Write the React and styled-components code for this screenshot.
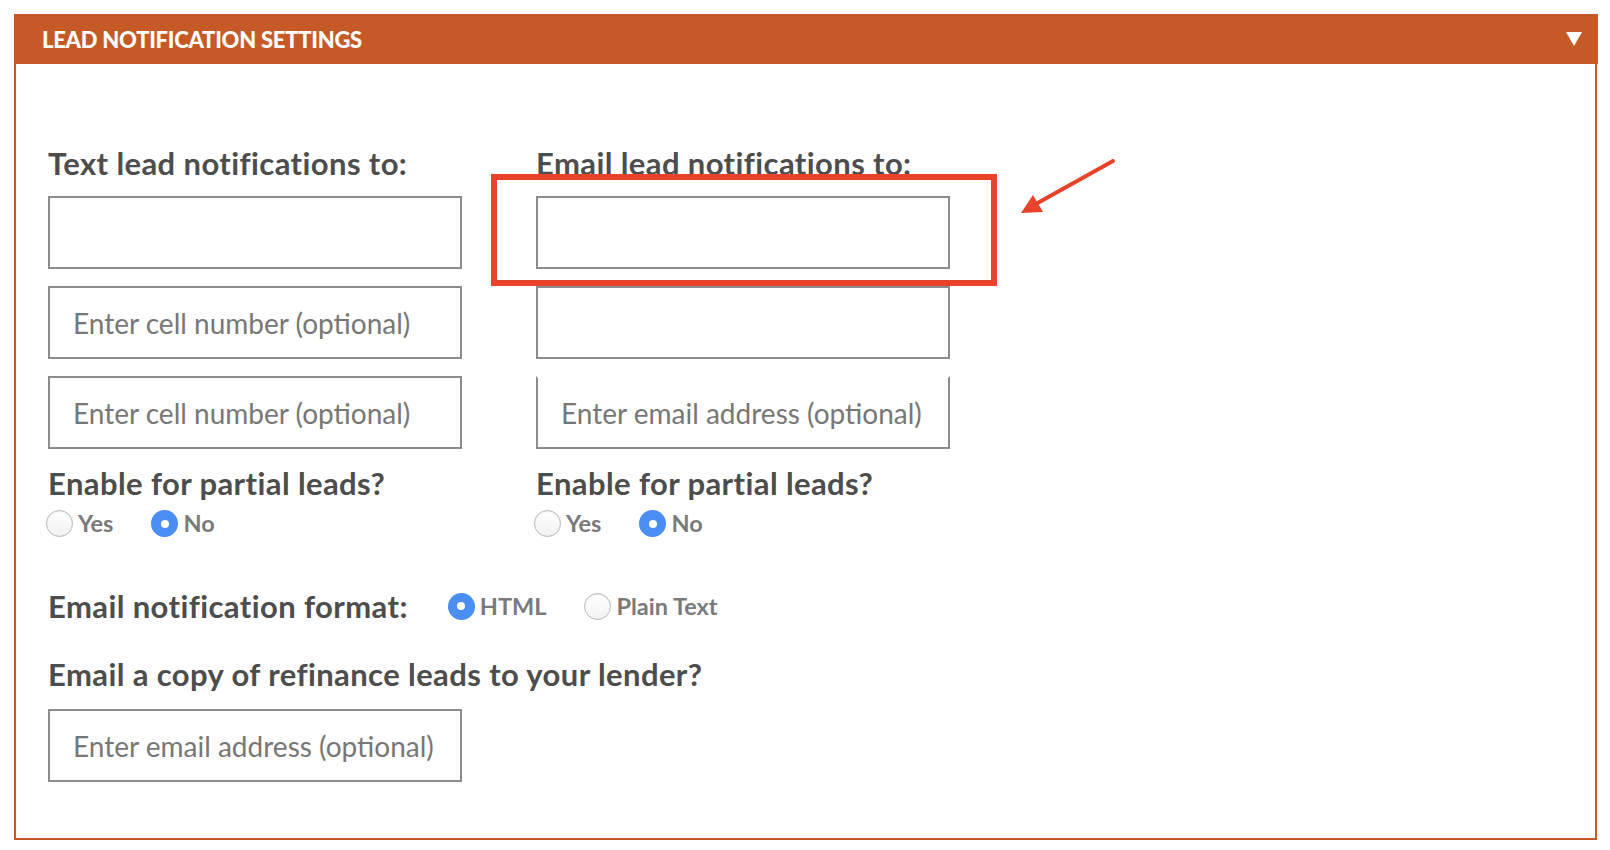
import React from 'react';
import styled, { createGlobalStyle, css } from 'styled-components';

const GlobalStyle = createGlobalStyle`
  html, body { margin: 0; padding: 0; background: #ffffff; }
  body { font-family: Lato, "Liberation Sans", sans-serif; }
  * { box-sizing: border-box; }
`;

const ORANGE = '#c55a26';
const RED = '#e8432a';

const Page = styled.div`
  padding: 14px 12px 0 14px;
`;

const Panel = styled.section`
  width: 1584px;
`;

const Header = styled.header`
  height: 50px;
  background: ${ORANGE};
  display: flex;
  align-items: center;
  justify-content: space-between;
  padding: 0 16px 0 28px;
`;

const Title = styled.h2`
  margin: 0;
  padding-top: 2px;
  color: #ffffff;
  font: 900 22px/1 Lato, "Liberation Sans", sans-serif;
  letter-spacing: -0.25px;
  text-transform: uppercase;
`;

const Caret = styled.span`
  width: 0;
  height: 0;
  border-left: 8px solid transparent;
  border-right: 8px solid transparent;
  border-top: 14px solid #ffffff;
`;

const Body = styled.div`
  width: 1583px;
  height: 776px;
  border: 2px solid ${ORANGE};
  border-top: none;
  padding: 84px 0 0 32px;
`;

const Columns = styled.div`
  display: flex;
  gap: 74px;
`;

const Column = styled.div`
  width: 414px;
  display: flex;
  flex-direction: column;
`;

const Label = styled.div`
  color: #4d4d4d;
  font: 700 31px/30px Lato, "Liberation Sans", sans-serif;
  letter-spacing: 0.4px;
  white-space: nowrap;
  margin-bottom: ${p => p.$after || 0}px;
`;

const InputStack = styled.div`
  display: flex;
  flex-direction: column;
  gap: 17px;
  margin-bottom: 19px;
`;

const FieldWrap = styled.div`
  position: relative;
`;

const TextInput = styled.input`
  display: block;
  width: 414px;
  height: 73px;
  margin: 0;
  border: 2px solid #8c8c8c;
  border-radius: 0;
  background: #ffffff;
  padding: 0 23px;
  color: #555555;
  font: 400 28px Lato, "Liberation Sans", sans-serif;
  outline: none;
  ${p => p.$noTop && css`
    border-top-color: transparent;
  `}
  &::placeholder {
    color: #777777;
    opacity: 1;
  }
`;

const Highlight = styled.div`
  position: absolute;
  left: -45px;
  top: -22px;
  width: 506px;
  height: 112px;
  border: 6px solid ${RED};
  pointer-events: none;
`;

const ArrowSvg = styled.svg`
  position: absolute;
  left: 470px;
  top: -45px;
  width: 120px;
  height: 75px;
  overflow: visible;
`;

const RadioRow = styled.div`
  display: flex;
  align-items: center;
  gap: ${p => p.$gap || 38}px;
  margin-left: ${p => p.$shift || 0}px;
`;

const RadioItem = styled.label`
  display: flex;
  align-items: center;
  gap: 5px;
  color: #7a7a7a;
  font: 700 23.5px/27px Lato, "Liberation Sans", sans-serif;
  cursor: pointer;
`;

const RadioDot = styled.span`
  position: relative;
  width: 27px;
  height: 27px;
  border-radius: 50%;
  flex: none;
  ${p => p.$checked ? css`
    background: #4a8ef2;
    &::after {
      content: '';
      position: absolute;
      left: 50%;
      top: 50%;
      width: 8px;
      height: 8px;
      margin: -4px 0 0 -4px;
      border-radius: 50%;
      background: #ffffff;
    }
  ` : css`
    background: linear-gradient(#ffffff, #f2f2f2);
    border: 1px solid #b8b8b8;
    box-shadow: inset 0 1px 1px rgba(0,0,0,0.08);
  `}
`;

const FormatRow = styled.div`
  display: flex;
  align-items: center;
  gap: 40px;
  margin-top: 54px;
  margin-bottom: 38px;
`;

function Radio({ checked, children }) {
  return (
    <RadioItem>
      <RadioDot $checked={checked} />
      {children}
    </RadioItem>
  );
}

function PartialLeads() {
  return (
    <>
      <Label $after={12}>Enable for partial leads?</Label>
      <RadioRow $shift={-2}>
        <Radio>Yes</Radio>
        <Radio checked>No</Radio>
      </RadioRow>
    </>
  );
}

export default function App() {
  return (
    <>
      <GlobalStyle />
      <Page>
        <Panel>
          <Header>
            <Title>Lead Notification Settings</Title>
            <Caret />
          </Header>
          <Body>
            <Columns>
              <Column>
                <Label $after={18}>Text lead notifications to:</Label>
                <InputStack>
                  <TextInput />
                  <TextInput placeholder="Enter cell number (optional)" />
                  <TextInput placeholder="Enter cell number (optional)" />
                </InputStack>
                <PartialLeads />
              </Column>
              <Column>
                <Label $after={18}>Email lead notifications to:</Label>
                <InputStack>
                  <FieldWrap>
                    <TextInput />
                    <Highlight />
                    <ArrowSvg viewBox="0 0 120 75">
                      <line x1="107" y1="10" x2="28" y2="54" stroke={RED} strokeWidth="4" strokeLinecap="round" />
                      <polygon points="15,62 27,44 37,61" fill={RED} />
                    </ArrowSvg>
                  </FieldWrap>
                  <TextInput />
                  <TextInput $noTop placeholder="Enter email address (optional)" />
                </InputStack>
                <PartialLeads />
              </Column>
            </Columns>
            <FormatRow>
              <Label>Email notification format:</Label>
              <RadioRow $gap={38}>
                <Radio checked>HTML</Radio>
                <Radio>Plain Text</Radio>
              </RadioRow>
            </FormatRow>
            <Label $after={20}>Email a copy of refinance leads to your lender?</Label>
            <TextInput placeholder="Enter email address (optional)" />
          </Body>
        </Panel>
      </Page>
    </>
  );
}
